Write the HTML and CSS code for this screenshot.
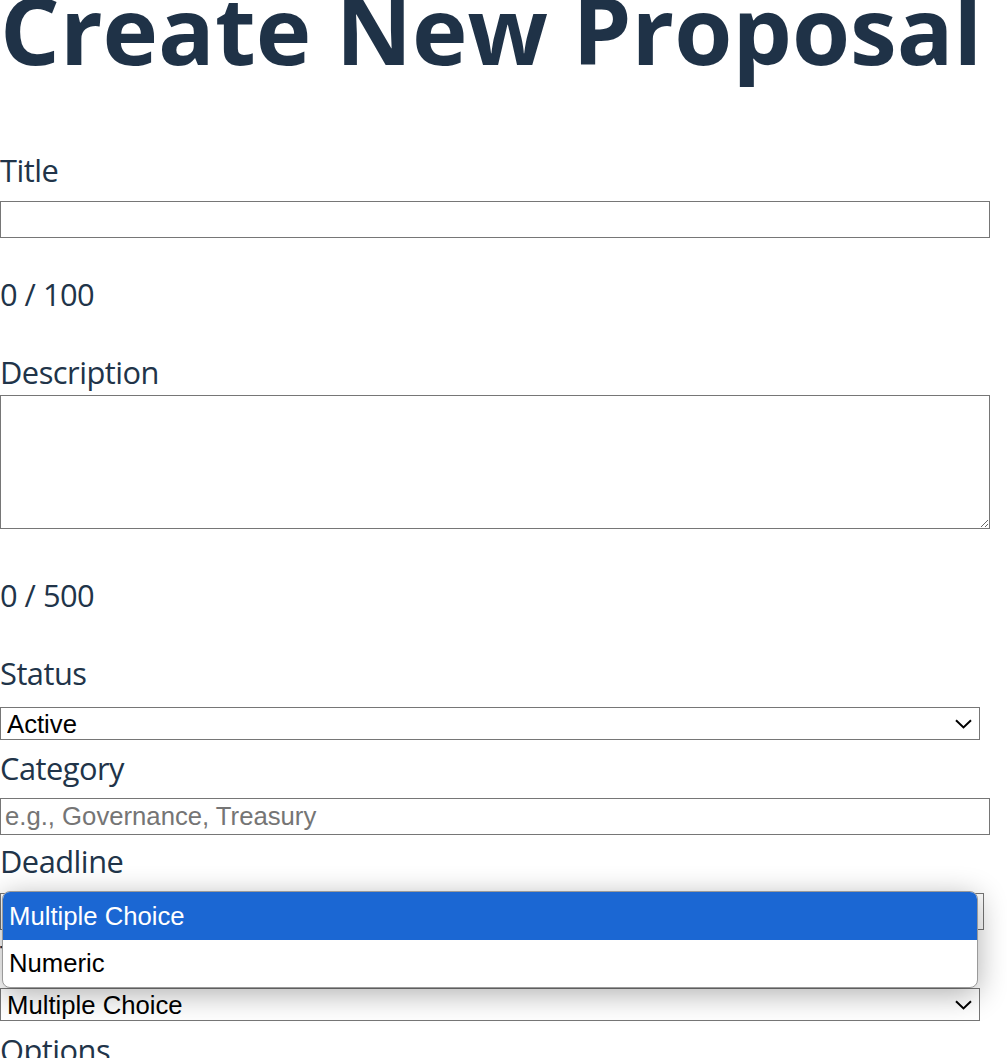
FILE: index.html
```html
<!DOCTYPE html>
<html lang="en">
<head>
<meta charset="utf-8">
<title>Create New Proposal</title>
<link rel="stylesheet" href="styles.css">
</head>
<body>
<main class="page">
  <h1 class="heading">Create New Proposal</h1>
  <form class="form">
    <label class="lbl lbl-title" for="title">Title</label>
    <input class="field field-text" id="title" type="text">
    <p class="count count-title">0 / 100</p>

    <label class="lbl lbl-desc" for="desc">Description</label>
    <textarea class="field field-area" id="desc"></textarea>
    <p class="count count-desc">0 / 500</p>

    <label class="lbl lbl-status" for="status">Status</label>
    <div class="select-wrap">
      <select class="select" id="status"><option>Active</option></select>
      <svg class="chev" width="17" height="10" viewBox="0 0 17 10"><path d="M1 1.2 L8.5 8.4 L16 1.2" fill="none" stroke="#000" stroke-width="2"/></svg>
    </div>

    <label class="lbl lbl-cat" for="cat">Category</label>
    <input class="field field-text" id="cat" type="text" placeholder="e.g., Governance, Treasury">

    <label class="lbl lbl-deadline" for="deadline">Deadline</label>
    <input class="field field-text field-date" id="deadline" type="text">

    <label class="lbl lbl-type" for="type">Type</label>
    <div class="select-wrap type-wrap">
      <select class="select" id="type"><option>Multiple Choice</option><option>Numeric</option></select>
      <svg class="chev" width="17" height="10" viewBox="0 0 17 10"><path d="M1 1.2 L8.5 8.4 L16 1.2" fill="none" stroke="#000" stroke-width="2"/></svg>
      <div class="popup">
        <div class="opt opt-active">Multiple Choice</div>
        <div class="opt">Numeric</div>
      </div>
    </div>

    <label class="lbl lbl-options">Options</label>
  </form>
</main>
</body>
</html>
```

FILE: styles.css
```css
* { box-sizing: border-box; }
html, body { margin: 0; padding: 0; background: #fff; }
body {
  font-family: "Open Sans", "Noto Sans", sans-serif;
  color: #213449;
  overflow: hidden;
}
.page { width: 1007px; }
.heading {
  margin: 0 0 91px;
  font-size: 94px;
  font-weight: 700;
  line-height: 59px;
  color: #1f3247;
  white-space: nowrap;
}
.form { display: flex; flex-direction: column; align-items: flex-start; }
.lbl, .count {
  display: block;
  margin: 0;
  font-size: 30.8px;
  line-height: 40px;
  letter-spacing: -0.5px;
}
.field {
  display: block;
  width: 990px;
  margin: 0;
  padding: 0 4px;
  border: 1px solid #767676;
  border-radius: 0;
  background: #fff;
  color: #000;
  font-family: "Liberation Sans", Arial, sans-serif;
  font-size: 25.7px;
  outline: none;
}
.field::placeholder { color: #757575; }
.field-text { height: 37px; }
.field-date { width: 984px; }
.field-area { height: 134px; resize: both; }

.lbl-title { margin-bottom: 11px; }
.count-title { margin: 36px 0 38px; }
.lbl-desc { margin-bottom: 3px; }
.count-desc { margin: 46px 0 38px; }
.lbl-status { margin-bottom: 14px; }
.lbl-cat { margin: 8px 0 10px; }
.lbl-deadline { margin: 6px 0 12px; }
.lbl-type { margin: 6px 0 12px; }
.lbl-options { margin-top: 9px; }

.select-wrap { position: relative; width: 980px; }
.select {
  display: block;
  width: 980px;
  height: 33px;
  margin: 0;
  padding: 0 6px;
  border: 1px solid #767676;
  border-radius: 0;
  background: #fff;
  color: #000;
  font-family: "Liberation Sans", Arial, sans-serif;
  font-size: 25.7px;
  -webkit-appearance: none;
  appearance: none;
  outline: none;
}
.chev {
  position: absolute;
  right: 8px;
  top: 50%;
  transform: translateY(-50%);
  pointer-events: none;
}
.popup {
  position: absolute;
  left: 2px;
  bottom: 100%;
  width: 976px;
  border: 1px solid #9a9a9a;
  border-radius: 8px;
  background: #fff;
  overflow: hidden;
  box-shadow: 0 6px 30px rgba(0, 0, 0, 0.32);
  z-index: 5;
}
.opt {
  height: 47px;
  padding: 0 6px;
  display: flex;
  align-items: center;
  font-family: "Liberation Sans", Arial, sans-serif;
  font-size: 25.7px;
  color: #000;
}
.opt-active { background: #1b67d3; color: #fff; height: 48px; }
```
